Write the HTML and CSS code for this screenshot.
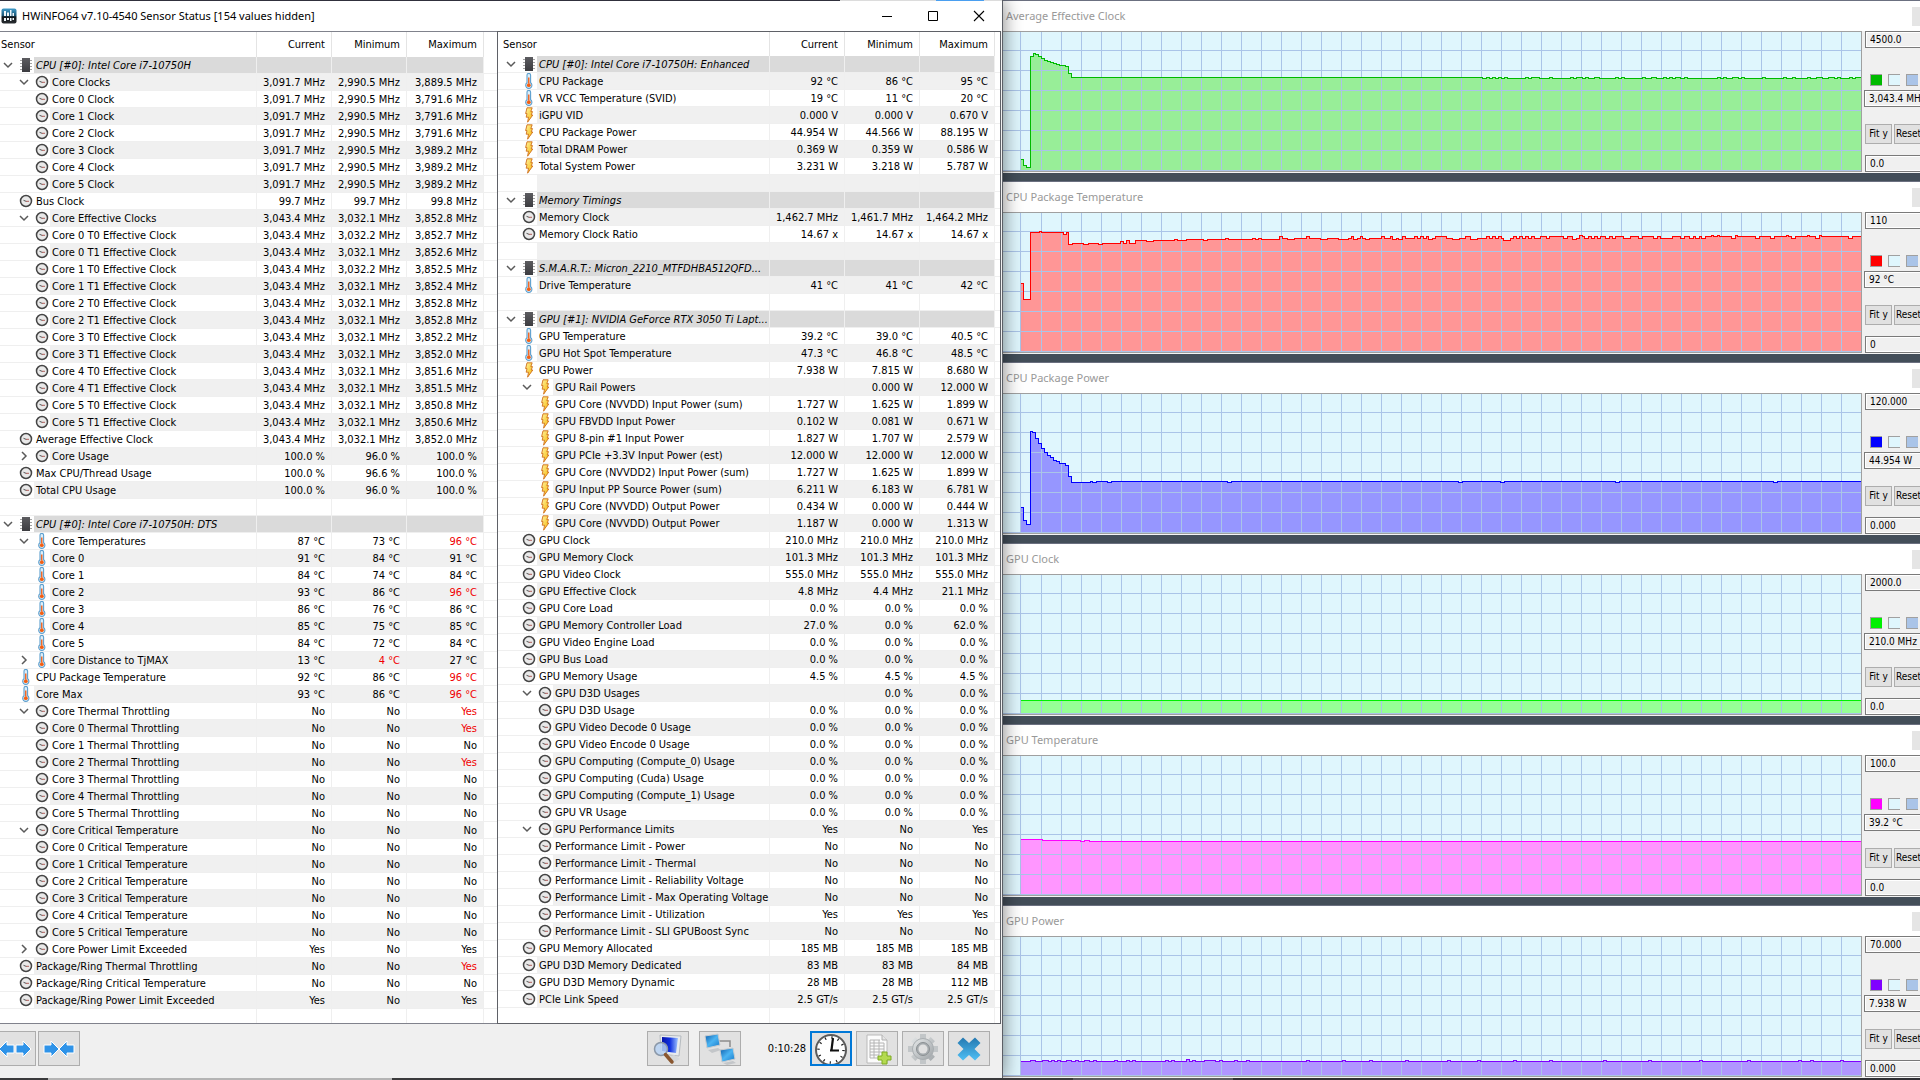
FILE: index.html
```html
<!DOCTYPE html>
<html lang="en">
<head>
<meta charset="utf-8">
<title>HWiNFO64 v7.10-4540 Sensor Status</title>
<link rel="stylesheet" href="styles.css">
</head>
<body>
<svg class="defs" width="0" height="0" aria-hidden="true">
  <defs>
    <linearGradient id="boltFill" x1="0" y1="0" x2="1" y2="1"><stop offset="0" stop-color="#fff3a0"/><stop offset="1" stop-color="#f5b400"/></linearGradient>
    <linearGradient id="chipFill" x1="0" y1="0" x2="0" y2="1"><stop offset="0" stop-color="#5c5c60"/><stop offset="1" stop-color="#3c3c40"/></linearGradient>
    <linearGradient id="blueFill" x1="0" y1="0" x2="1" y2="1"><stop offset="0" stop-color="#0b5cab"/><stop offset=".5" stop-color="#4bb4f2"/><stop offset="1" stop-color="#1778c8"/></linearGradient>
    <linearGradient id="crossFill" x1="0" y1="0" x2="0" y2="1"><stop offset="0" stop-color="#2478b0"/><stop offset="1" stop-color="#4fc0f5"/></linearGradient>
    <linearGradient id="appFill" x1="0" y1="0" x2="0" y2="1"><stop offset="0" stop-color="#3f9ccb"/><stop offset=".5" stop-color="#17506f"/><stop offset=".55" stop-color="#101418"/><stop offset="1" stop-color="#2a2e32"/></linearGradient>
    <linearGradient id="screenFill" x1="0" y1="0" x2="1" y2="0"><stop offset="0" stop-color="#0814a8"/><stop offset=".5" stop-color="#1030e0"/><stop offset="1" stop-color="#9fc4ff"/></linearGradient>
    <linearGradient id="gearFill" x1="0" y1="0" x2="1" y2="1"><stop offset="0" stop-color="#e6e9ea"/><stop offset="1" stop-color="#9ea3a6"/></linearGradient>
  </defs>
  <symbol id="i-clock" viewBox="0 0 16 16"><circle cx="8" cy="8" r="5.500" fill="#e9e9e9" stroke="#454545" stroke-width="1.500"/><path d="M8.500 8.500 5.500 7.300" stroke="#555" stroke-width="1"/><path d="M8 8.300h3" stroke="#b0605c" stroke-width="1"/></symbol>
  <symbol id="i-temp" viewBox="0 0 16 16"><path d="M6 2.2a1.8 1.8 0 0 1 3.600 0v7.600a3.100 3.100 0 1 1-3.600 0z" fill="#dceefa" stroke="#5d9fce" stroke-width="1.100"/><path d="M7 4.500h1.500v6H7z" fill="#f06a2a"/><circle cx="7.800" cy="12.200" r="1.900" fill="#f25f14"/></symbol>
  <symbol id="i-bolt" viewBox="0 0 16 16"><path d="M6 .8h5.200L9.800 4.600h1.700L10.200 8h1.600L6.600 15.200l.9-5H5.200l.8-3.600H4.600z" fill="url(#boltFill)" stroke="#cf6f1c" stroke-width=".9"/></symbol>
  <symbol id="i-chip" viewBox="0 0 16 16"><path d="M2 3.500h12M2 6.500h12M2 9.500h12M2 12.500h12" stroke="#a2a2a2" stroke-width="1.200"/><path d="M4 1h8v14H4z" fill="url(#chipFill)"/></symbol>
  <symbol id="i-chev" viewBox="0 0 12 12"><path d="M2 4l4 4 4-4" fill="none" stroke="#5a5a5a" stroke-width="1.500"/></symbol>
</svg>

<div class="desktop">
  <main class="sensors">
    <div class="edge"></div>
    <header class="titlebar">
      <svg class="app-icon" viewBox="0 0 16 16" aria-hidden="true"><rect x=".5" y=".5" width="15" height="15" rx="2" fill="url(#appFill)"/><path d="M3 3v5h2V3zM6 4.500V8h2V4.500zM9 2v6h1.500V2zM11.500 5v3H13V5zM3 10h2v3H3zM6 10h2v2H6zM9 10h1.500v3H9zM11.500 10H13v2h-1.500z" fill="#eef6fa"/></svg>
      <h1 class="title">HWiNFO64 v7.10-4540 Sensor Status [154 values hidden]</h1>
      <button class="caption" aria-label="Minimize"><svg width="12" height="12"><path d="M1 6.500h10" stroke="#000"/></svg></button>
      <button class="caption" aria-label="Maximize"><svg width="12" height="12"><path d="M1.500 1.500h9v9h-9z" fill="none" stroke="#000"/></svg></button>
      <button class="caption" aria-label="Close"><svg width="12" height="12"><path d="M1 1l10 10M11 1 1 11" stroke="#000" stroke-width="1.100"/></svg></button>
    </header>
    <div class="panes">
      <section class="pane pane-a">
        <table class="grid"><colgroup><col><col class="w75"><col class="w75"><col class="w77"><col class="w13"></colgroup>
          <thead><tr><th class="name">Sensor</th><th>Current</th><th>Minimum</th><th>Maximum</th><th class="pad"></th></tr></thead>
          <tbody id="rows-a"></tbody></table>
      </section>
      <section class="pane pane-b">
        <table class="grid"><colgroup><col><col class="w75"><col class="w75"><col class="w75"><col class="w5"></colgroup>
          <thead><tr><th class="name">Sensor</th><th>Current</th><th>Minimum</th><th>Maximum</th><th class="pad"></th></tr></thead>
          <tbody id="rows-b"></tbody></table>
      </section>
    </div>
    <footer class="toolbar">
      <button class="tool tool-cut" aria-label="Expand columns"><svg width="34" height="22"><path d="M1 11 9 3v4h7v8H9v4zM33 11l-8-8v4h-7v8h7v4z" fill="#2f93e8" stroke="#fff" stroke-width="1"/></svg></button>
      <button class="tool" aria-label="Shrink columns"><svg width="34" height="22"><path d="M17 11 9 3v4H2v8h7v4zM17 11l8-8v4h7v8h-7v4z" fill="#2f93e8" stroke="#fff" stroke-width="1"/></svg></button>
      <div class="spacer"></div>
      <button class="tool" aria-label="Find sensor"><svg width="32" height="32"><path d="M8 2 29 3l-2 20-18-2z" fill="#e8ebee" stroke="#b5babf"/><path d="M10 4l16 1-2 15-14-2z" fill="url(#screenFill)"/><path d="M14 25l8-3 6 4-7 4z" fill="#d5d8da"/><circle cx="9" cy="16" r="6.500" fill="#b7d2f3" fill-opacity=".85" stroke="#8b98a8" stroke-width="1.500"/><path d="M13.500 21.500 20 29" stroke="#8a5730" stroke-width="3.500" stroke-linecap="round"/></svg></button>
      <button class="tool tool-net" aria-label="Remote monitoring"><svg width="34" height="32"><path d="M16 8h11v6" fill="none" stroke="#8d8d8d" stroke-width="1.500"/><path d="M5 17l10-2 3 2-9 3z" fill="#c3c6c9"/><path d="M2 3 15 1l2 11-13 3z" fill="url(#blueFill)" stroke="#c7ccd0"/><path d="M20 30l10-2 3 2-9 2z" fill="#c3c6c9"/><path d="M17 17l13-2 2 11-13 3z" fill="url(#blueFill)" stroke="#c7ccd0"/></svg></button>
      <time class="timer">0:10:28</time>
      <button class="tool tool-on" aria-label="Reset timer"><svg width="34" height="34"><circle cx="17" cy="17" r="15" fill="#fff" stroke="#5b5b5b" stroke-width="2"/><circle cx="17" cy="17" r="12.500" fill="none" stroke="#222" stroke-width="2.500" stroke-dasharray="1.200 5.345"/><path d="M17.500 17 19 5M16 17.500h9" stroke="#111" stroke-width="2.200"/></svg></button>
      <button class="tool" aria-label="Start logging"><svg width="32" height="32"><path d="M6 2h15l5 5v23H6z" fill="#fbfbfb" stroke="#b9b9b9"/><path d="M21 2v5h5" fill="#e5e5e5" stroke="#b0b0b0"/><path d="M9 7h10M9 10h14M9 13h14M9 16h14M9 19h14M9 22h9M9 25h8M9 7v18M13 7v18M18 7v15M23 10v9" stroke="#b4b4b4"/><path d="M21 19h5v4h4v4h-4v4h-5v-4h-4v-4h4z" fill="#b4da50" stroke="#7fab22"/></svg></button>
      <button class="tool" aria-label="Settings"><svg width="32" height="32"><g stroke="url(#gearFill)" stroke-width="6"><path d="M16 2v28.010M2 16h28.010M6.200 6.200l19.600 19.610M25.800 6.200 6.200 25.810"/></g><path d="M13 1h6v5h-6zM13 26h6v5h-6zM1 13h5v6H1zM26 13h5v6h-5z" fill="#c2c6c8"/><circle cx="16" cy="16" r="10.500" fill="url(#gearFill)" stroke="#a9aeb1"/><circle cx="16" cy="16" r="6.500" fill="#a8adb0" stroke="#8b9093"/><circle cx="16" cy="16" r="4.500" fill="#e1e1e1"/></svg></button>
      <button class="tool" aria-label="Close sensors"><svg width="26" height="26"><path d="M7 1.500 13 7l6-5.500 5.500 5.500-6 6 6 6-5.500 5.500L13 19l-6 5.500L1.500 19l6-6-6-6z" fill="url(#crossFill)"/></svg></button>
    </footer>
  </main>
  <aside class="charts" id="charts"></aside>
  <div class="taskbar"></div>
</div>
<script src="script.js"></script>
</body>
</html>
```
FILE: styles.css
```css
* { box-sizing: border-box; }
body {
  margin: 0;
  background: #434e59;
  color: #000;
  font: 11px/16px "DejaVu Sans Condensed", "DejaVu Sans", sans-serif;
}
button, input { font: inherit; color: inherit; margin: 0; }
.defs { position: absolute; }

.desktop {
  display: grid;
  grid-template-columns: minmax(0, 1003fr) minmax(0, 917fr);
  grid-template-rows: 1fr 2px;
  min-height: 100vh;
  overflow: hidden;
}
.taskbar {
  grid-column: 1 / -1;
  position: relative;
  z-index: 2;
  background: linear-gradient(90deg, #3a3a3c 2.500%, #b4b4b4 2.500% 20.400%, #3a3a3c 20.400% 55.900%, #5c5c60 55.900% 64.200%, #303034 64.200%);
}

/* Sensor window */
.sensors {
  position: relative;
  z-index: 1;
  display: flex;
  flex-direction: column;
  background: #f0f0f0;
  border-right: 1px solid #5c5f66;
  box-shadow: 0 0 18px rgba(0, 0, 0, .5);
}
.edge {
  height: 1px;
  background: linear-gradient(90deg, #30303c 83.800%, #dcdcdc 83.800% 93.400%, #4a9ff0 93.400% 98.200%, #dcdcdc 98.200%);
}
.titlebar {
  display: flex;
  align-items: center;
  height: 30px;
  background: #fff;
}
.app-icon { width: 16px; height: 16px; margin: 0 5px 0 1px; }
.title {
  flex: 1;
  margin: 0;
  font: 11px/30px "Noto Sans", "Open Sans", sans-serif;
  white-space: nowrap;
}
.caption {
  display: grid;
  place-items: center;
  width: 46px;
  height: 30px;
  padding: 0;
  border: 0;
  background: none;
}
.panes {
  display: grid;
  flex: 1;
  grid-template-columns: minmax(0, 497fr) minmax(0, 504fr);
  padding-right: 1px;
}
.pane { background: #fff; border-top: 1px solid #80828c; border-bottom: 1px solid #80828c; }
.pane-b { border: 1px solid #5f6167; }

.grid {
  width: 100%;
  table-layout: fixed;
  border-collapse: separate;
  border-spacing: 0;
  white-space: nowrap;
}
.w75 { width: 75px; }
.w77 { width: 77px; }
.w13 { width: 13px; }
.w5 { width: 5px; }
.grid th {
  height: 25px;
  padding: 1px 6px 0 0;
  border-right: 1px solid #e4e4e4;
  font-weight: normal;
  text-align: right;
}
.pane-b th { height: 24px; }
.grid th.name { padding-left: 1px; text-align: left; }
.pane-b th.name { padding-left: 5px; }
.grid td {
  height: 17px;
  padding: 2px 6px 0 0;
  border-right: 1px solid #efefef;
  border-bottom: 1px solid #efefef;
  line-height: 14px;
  text-align: right;
}
.grid td.name { padding: 0; }
.grid .pad { padding: 0; border-right: 0; background: #fff; }
.cell { display: flex; height: 16px; text-align: left; }
.gutter {
  display: flex;
  flex: none;
  justify-content: flex-end;
  align-items: center;
  gap: 4px;
  width: 34px;
  background: #fff;
}
.sub .gutter { width: 50px; }
.pane-b .gutter { width: 39px; }
.pane-b .sub .gutter { width: 55px; }
.gutter svg { display: block; width: 16px; height: 16px; }
.toggle { padding: 0; border: 0; background: none; }
.gutter .toggle svg { width: 12px; height: 12px; }
.shut svg { transform: rotate(-90deg); }
.label { flex: 1; min-width: 0; padding: 2px 0 0 2px; }
.grid tr.alt td { background: #f0f0f0; }
.grid tr.head td { background: #dadada; }
.grid tr td.pad, .grid tr.alt td.pad, .grid tr.head td.pad { background: #fff; }
.head .label { font-style: italic; }
.hot { color: #f00000; }
.grid tr.tail td { height: 14px; border-bottom: 0; line-height: 10px; }
.pane-b tr.tail td { height: 15px; }

.toolbar {
  display: flex;
  align-items: center;
  gap: 4px;
  height: 54px;
  padding: 0 12px 5px 0;
}
.tool {
  display: grid;
  flex: none;
  place-items: center;
  width: 42px;
  height: 35px;
  padding: 0;
  border: 1px solid #adadad;
  background: #e1e1e1;
  overflow: hidden;
}
.tool-cut { margin-left: -6px; margin-right: -2px; }
.tool-on { border: 2px solid #0078d7; }
.tool-net { margin: 0 22px 0 6px; }
.spacer { flex: 1; }
.timer { width: 39px; text-align: right; }

/* Graph windows */
.charts { display: flex; flex-direction: column; gap: 8px; overflow: hidden; }
.graph { border-top: 1px solid #6b7080; border-bottom: 1px solid #f4f4f4; background: #f0f0f0; }
.graph-title {
  display: flex;
  align-items: center;
  justify-content: space-between;
  height: 30px;
  padding-left: 3px;
  background: #fff;
}
.graph-title h2 {
  margin: 0;
  color: #999;
  font: 11px/30px "Noto Sans", "Open Sans", sans-serif;
  white-space: nowrap;
}
.graph-close {
  width: 8px;
  height: 19px;
  padding: 0;
  border: 0;
  background: #e5e5e5;
}
.graph-body { display: flex; height: 141px; }
.plot {
  display: block;
  flex: 1;
  min-width: 0;
  height: 141px;
  border: 1px solid #a0a0a0;
  border-left: 0;
  background: #dff6fd;
}
.side { flex: none; width: 58px; padding-left: 3px; overflow: hidden; }
.field {
  display: block;
  width: 80px;
  height: 17px;
  padding: 0 4px;
  border: 1px solid #7a7a7a;
  outline: 1px solid #fff;
  outline-offset: -2px;
  background: #f0f0f0;
  font-size: 10px;
  line-height: 15px;
}
.field-now { margin: 4px 0 17px -1px; }
.swatches { display: flex; gap: 6px; margin: 26px 0 0 5px; }
.swatch {
  flex: none;
  width: 12px;
  height: 12px;
  padding: 0;
  border: solid #a0a0a0;
  border-width: 1px 0 1px 1px;
}
.actions { display: flex; gap: 2px; margin-bottom: 11px; }
.action {
  flex: none;
  width: 27px;
  height: 20px;
  padding: 0;
  border: 1px solid #adadad;
  background: #e1e1e1;
  font-size: 10px;
}
.action-wide { width: 32px; padding-left: 1px; text-align: left; }
```
FILE: script.js
```js
// Sensor rows: tree marker and icon, name, current, minimum, maximum. "!" marks a critical value.
// Markers: H group head, v open parent, > closed parent, s child, - top-level value.
const paneA = `
Hg|CPU [#0]: Intel Core i7-10750H
vc|Core Clocks|3,091.7 MHz|2,990.5 MHz|3,889.5 MHz
sc|Core 0 Clock|3,091.7 MHz|2,990.5 MHz|3,791.6 MHz
sc|Core 1 Clock|3,091.7 MHz|2,990.5 MHz|3,791.6 MHz
sc|Core 2 Clock|3,091.7 MHz|2,990.5 MHz|3,791.6 MHz
sc|Core 3 Clock|3,091.7 MHz|2,990.5 MHz|3,989.2 MHz
sc|Core 4 Clock|3,091.7 MHz|2,990.5 MHz|3,989.2 MHz
sc|Core 5 Clock|3,091.7 MHz|2,990.5 MHz|3,989.2 MHz
-c|Bus Clock|99.7 MHz|99.7 MHz|99.8 MHz
vc|Core Effective Clocks|3,043.4 MHz|3,032.1 MHz|3,852.8 MHz
sc|Core 0 T0 Effective Clock|3,043.4 MHz|3,032.2 MHz|3,852.7 MHz
sc|Core 0 T1 Effective Clock|3,043.4 MHz|3,032.1 MHz|3,852.6 MHz
sc|Core 1 T0 Effective Clock|3,043.4 MHz|3,032.2 MHz|3,852.5 MHz
sc|Core 1 T1 Effective Clock|3,043.4 MHz|3,032.1 MHz|3,852.4 MHz
sc|Core 2 T0 Effective Clock|3,043.4 MHz|3,032.1 MHz|3,852.8 MHz
sc|Core 2 T1 Effective Clock|3,043.4 MHz|3,032.1 MHz|3,852.8 MHz
sc|Core 3 T0 Effective Clock|3,043.4 MHz|3,032.1 MHz|3,852.2 MHz
sc|Core 3 T1 Effective Clock|3,043.4 MHz|3,032.1 MHz|3,852.0 MHz
sc|Core 4 T0 Effective Clock|3,043.4 MHz|3,032.1 MHz|3,851.6 MHz
sc|Core 4 T1 Effective Clock|3,043.4 MHz|3,032.1 MHz|3,851.5 MHz
sc|Core 5 T0 Effective Clock|3,043.4 MHz|3,032.1 MHz|3,850.8 MHz
sc|Core 5 T1 Effective Clock|3,043.4 MHz|3,032.1 MHz|3,850.6 MHz
-c|Average Effective Clock|3,043.4 MHz|3,032.1 MHz|3,852.0 MHz
>c|Core Usage|100.0 %|96.0 %|100.0 %
-c|Max CPU/Thread Usage|100.0 %|96.6 %|100.0 %
-c|Total CPU Usage|100.0 %|96.0 %|100.0 %

Hg|CPU [#0]: Intel Core i7-10750H: DTS
vt|Core Temperatures|87 °C|73 °C|!96 °C
st|Core 0|91 °C|84 °C|91 °C
st|Core 1|84 °C|74 °C|84 °C
st|Core 2|93 °C|86 °C|!96 °C
st|Core 3|86 °C|76 °C|86 °C
st|Core 4|85 °C|75 °C|85 °C
st|Core 5|84 °C|72 °C|84 °C
>t|Core Distance to TjMAX|13 °C|!4 °C|27 °C
-t|CPU Package Temperature|92 °C|86 °C|!96 °C
-t|Core Max|93 °C|86 °C|!96 °C
vc|Core Thermal Throttling|No|No|!Yes
sc|Core 0 Thermal Throttling|No|No|!Yes
sc|Core 1 Thermal Throttling|No|No|No
sc|Core 2 Thermal Throttling|No|No|!Yes
sc|Core 3 Thermal Throttling|No|No|No
sc|Core 4 Thermal Throttling|No|No|No
sc|Core 5 Thermal Throttling|No|No|No
vc|Core Critical Temperature|No|No|No
sc|Core 0 Critical Temperature|No|No|No
sc|Core 1 Critical Temperature|No|No|No
sc|Core 2 Critical Temperature|No|No|No
sc|Core 3 Critical Temperature|No|No|No
sc|Core 4 Critical Temperature|No|No|No
sc|Core 5 Critical Temperature|No|No|No
>c|Core Power Limit Exceeded|Yes|No|Yes
-c|Package/Ring Thermal Throttling|No|No|!Yes
-c|Package/Ring Critical Temperature|No|No|No
-c|Package/Ring Power Limit Exceeded|Yes|No|Yes`;

const paneB = `
Hg|CPU [#0]: Intel Core i7-10750H: Enhanced
-t|CPU Package|92 °C|86 °C|95 °C
-t|VR VCC Temperature (SVID)|19 °C|11 °C|20 °C
-b|iGPU VID|0.000 V|0.000 V|0.670 V
-b|CPU Package Power|44.954 W|44.566 W|88.195 W
-b|Total DRAM Power|0.369 W|0.359 W|0.586 W
-b|Total System Power|3.231 W|3.218 W|5.787 W

Hg|Memory Timings
-c|Memory Clock|1,462.7 MHz|1,461.7 MHz|1,464.2 MHz
-c|Memory Clock Ratio|14.67 x|14.67 x|14.67 x

Hg|S.M.A.R.T.: Micron_2210_MTFDHBA512QFD...
-t|Drive Temperature|41 °C|41 °C|42 °C

Hg|GPU [#1]: NVIDIA GeForce RTX 3050 Ti Lapt...
-t|GPU Temperature|39.2 °C|39.0 °C|40.5 °C
-t|GPU Hot Spot Temperature|47.3 °C|46.8 °C|48.5 °C
-b|GPU Power|7.938 W|7.815 W|8.680 W
vb|GPU Rail Powers||0.000 W|12.000 W
sb|GPU Core (NVVDD) Input Power (sum)|1.727 W|1.625 W|1.899 W
sb|GPU FBVDD Input Power|0.102 W|0.081 W|0.671 W
sb|GPU 8-pin #1 Input Power|1.827 W|1.707 W|2.579 W
sb|GPU PCIe +3.3V Input Power (est)|12.000 W|12.000 W|12.000 W
sb|GPU Core (NVVDD2) Input Power (sum)|1.727 W|1.625 W|1.899 W
sb|GPU Input PP Source Power (sum)|6.211 W|6.183 W|6.781 W
sb|GPU Core (NVVDD) Output Power|0.434 W|0.000 W|0.444 W
sb|GPU Core (NVVDD) Output Power|1.187 W|0.000 W|1.313 W
-c|GPU Clock|210.0 MHz|210.0 MHz|210.0 MHz
-c|GPU Memory Clock|101.3 MHz|101.3 MHz|101.3 MHz
-c|GPU Video Clock|555.0 MHz|555.0 MHz|555.0 MHz
-c|GPU Effective Clock|4.8 MHz|4.4 MHz|21.1 MHz
-c|GPU Core Load|0.0 %|0.0 %|0.0 %
-c|GPU Memory Controller Load|27.0 %|0.0 %|62.0 %
-c|GPU Video Engine Load|0.0 %|0.0 %|0.0 %
-c|GPU Bus Load|0.0 %|0.0 %|0.0 %
-c|GPU Memory Usage|4.5 %|4.5 %|4.5 %
vc|GPU D3D Usages||0.0 %|0.0 %
sc|GPU D3D Usage|0.0 %|0.0 %|0.0 %
sc|GPU Video Decode 0 Usage|0.0 %|0.0 %|0.0 %
sc|GPU Video Encode 0 Usage|0.0 %|0.0 %|0.0 %
sc|GPU Computing (Compute_0) Usage|0.0 %|0.0 %|0.0 %
sc|GPU Computing (Cuda) Usage|0.0 %|0.0 %|0.0 %
sc|GPU Computing (Compute_1) Usage|0.0 %|0.0 %|0.0 %
sc|GPU VR Usage|0.0 %|0.0 %|0.0 %
vc|GPU Performance Limits|Yes|No|Yes
sc|Performance Limit - Power|No|No|No
sc|Performance Limit - Thermal|No|No|No
sc|Performance Limit - Reliability Voltage|No|No|No
sc|Performance Limit - Max Operating Voltage|No|No|No
sc|Performance Limit - Utilization|Yes|Yes|Yes
sc|Performance Limit - SLI GPUBoost Sync|No|No|No
-c|GPU Memory Allocated|185 MB|185 MB|185 MB
-c|GPU D3D Memory Dedicated|83 MB|83 MB|84 MB
-c|GPU D3D Memory Dynamic|28 MB|28 MB|112 MB
-c|PCIe Link Speed|2.5 GT/s|2.5 GT/s|2.5 GT/s`;

const icons = { g: 'chip', c: 'clock', t: 'temp', b: 'bolt' };

function rows(text) {
  return text.slice(1).split('\n').map((line, i) => {
    const [tag, name = '', ...vals] = line.split('|');
    const kind = tag[0] || '';
    const cls = [kind === 'H' ? 'head' : i % 2 ? 'alt' : '', 'v>s'.includes(kind) && kind ? 'sub' : ''].join(' ').trim();
    const toggle = kind && 'Hv>'.includes(kind)
      ? `<button class="toggle${kind === '>' ? ' shut' : ''}" aria-label="Toggle ${name}"><svg><use href="#i-chev"/></svg></button>` : '';
    const icon = kind ? `<svg><use href="#i-${icons[tag[1]]}"/></svg>` : '';
    const cells = [0, 1, 2].map(n => {
      const v = vals[n] || '';
      return v[0] === '!' ? `<td class="hot">${v.slice(1)}</td>` : `<td>${v}</td>`;
    }).join('');
    return `<tr class="${cls}"><td class="name"><div class="cell"><span class="gutter">${toggle}${icon}</span><span class="label">${name}</span></div></td>${cells}<td class="pad"></td></tr>`;
  }).join('') + '<tr class="tail"><td></td><td></td><td></td><td></td><td class="pad"></td></tr>';
}
document.getElementById('rows-a').innerHTML = rows(paneA);
document.getElementById('rows-b').innerHTML = rows(paneB);

// Each series is a list of steps "x:y"; bumps are "x+width" raised one unit above the base.
function bumps(base, list) {
  return list.split(' ').map(b => {
    const [x, w, up = 1] = b.split('+').map(Number);
    return `${x}:${base - up} ${x + w}:${base}`;
  }).join(' ');
}
const graphs = [
  { name: 'Average Effective Clock', top: '4500.0', now: '3,043.4 MHz', low: '0.0', line: '#00ba00', fill: '#98ee98',
    steps: '18:127 20:133 23:135 27:24 30:21 32:22 35:24 38:26 41:28 44:29 47:30 50:31 53:32 56:33 62:34 65:41 68:45 479:46 ' +
      bumps(46, '483+3 489+3 495+3 501+3 522+3 528+8 546+3 567+3 573+6 582+3 591+5 612+3 618+3 639+3 648+5 660+3 666+3 672+5 681+3 714+3 720+3 729+6 738+3 759+3 780+3 789+3 804+3 813+6 825+6 834+3 846+3 852+6') },
  { name: 'CPU Package Temperature', top: '110', now: '92 °C', low: '0', line: '#ff0000', fill: '#ff9696',
    steps: '18:70 20:86 27:19 36:18 38:19 60:21 63:19 65:31 69:30 80:31 85:30 95:31 99:30 117:28 120:30 123:27 126:30 132:27 143:28 150:27 171:26 174:27 183:26 200:27 204:26 222:25 225:26 249:25 252:26 255:25 258:26 276:23 279:25 284:26 291:25 303:23 306:25 317:26 324:25 335:26 345:25 348:23 350:26 354:25 357:23 359:25 362:26 366:25 378:23 381:25 387:23 389:26 393:25 395:26 399:23 402:25 411:23 414:25 417:23 420:25 423:23 425:26 429:25 432:23 443:25 449:26 456:25 462:23 467:26 474:25 483:23 486:25 489:23 492:25 495:23 498:25 500:27 507:25 510:23 513:25 516:23 519:25 522:23 525:25 528:23 531:25 537:23 543:25 546:23 560:25 564:23 569:26 573:25 576:22 579:23 581:25 585:23 588:25 591:23 594:25 597:23 602:25 606:23 609:25 612:23 620:25 627:23 635:25 639:23 650:25 654:23 657:25 669:23 677:25 681:23 686:25 690:23 692:25 696:23 698:25 702:23 708:22 710:23 714:22 716:23 728:25 732:22 734:23 752:25 756:23 767:25 771:23 783:22 785:23 788:25 792:23 804:22 806:23 812:25 816:22 818:23 845:25 849:23' },
  { name: 'CPU Package Power', top: '120.000', now: '44.954 W', low: '0.000', line: '#0000ff', fill: '#9696ff',
    steps: '18:113 20:126 23:130 27:37 29:38 32:44 35:49 38:54 41:58 44:61 47:63 50:66 53:67 56:69 62:71 65:82 68:88 87:87 89:88 93:87 104:88 108:87 224:88 228:87 455:88 459:87 497:88 501:87 612:88 616:87 770:88 774:87' },
  { name: 'GPU Clock', top: '2000.0', now: '210.0 MHz', low: '0.0', line: '#00f000', fill: '#96ff96', steps: '18:125' },
  { name: 'GPU Temperature', top: '100.0', now: '39.2 °C', low: '0.0', line: '#ff00ff', fill: '#ff96ff', steps: '18:83 39:84 77:85 81:84 86:85' },
  { name: 'GPU Power', top: '70.000', now: '7.938 W', low: '0.000', line: '#8000ff', fill: '#b096ff',
    steps: '18:124 ' + bumps(124, '27+5 39+6 48+3 54+3 63+5 72+3 81+5 90+3 111+3 123+3 129+3 162+3 168+3 183+3+2 189+3 201+11 216+3 231+3 243+3 303+3 339+3 366+3 402+3 444+3 474+3 510+3 546+3 600+3 645+3 696+3 744+3 795+3 807+3 837+3') }
];

function plot(g) {
  const pts = g.steps.trim().split(/\s+/).map(p => p.split(':').map(Number));
  let line = `M18 ${pts[0][1] + .5}`;
  for (const [x, y] of pts.slice(1)) line += `H${x + .5}V${y + .5}`;
  line += 'H858';
  let mesh = 'M17.5 0V139';
  for (let x = 38; x < 858; x += 20) mesh += `M${x + .5} 0V139`;
  for (let y = 18; y < 139; y += 20) mesh += `M0 ${y + .5}H858`;
  return `<svg class="plot" viewBox="0 0 858 139" preserveAspectRatio="none" shape-rendering="crispEdges" role="img" aria-label="${g.name}">
    <path d="${line}V139H18z" fill="${g.fill}"/><path d="${mesh}" stroke="#aac4e8"/><path d="${line}" fill="none" stroke="${g.line}"/></svg>`;
}

document.getElementById('charts').innerHTML = graphs.map(g => `<section class="graph">
  <div class="graph-title"><h2>${g.name}</h2><button class="graph-close" aria-label="Close ${g.name}"></button></div>
  <div class="graph-body">${plot(g)}
    <div class="side">
      <input class="field" aria-label="Graph maximum" value="${g.top}">
      <div class="swatches">
        <button class="swatch" aria-label="Line color" style="background:${g.line}"></button>
        <button class="swatch" aria-label="Background color" style="background:#dff6fd"></button>
        <button class="swatch" aria-label="Grid color" style="background:#aac4e8"></button>
      </div>
      <input class="field field-now" aria-label="Current value" value="${g.now}" readonly>
      <div class="actions"><button class="action">Fit y</button><button class="action action-wide">Reset</button></div>
      <input class="field" aria-label="Graph minimum" value="${g.low}">
    </div>
  </div>
</section>`).join('');
```
